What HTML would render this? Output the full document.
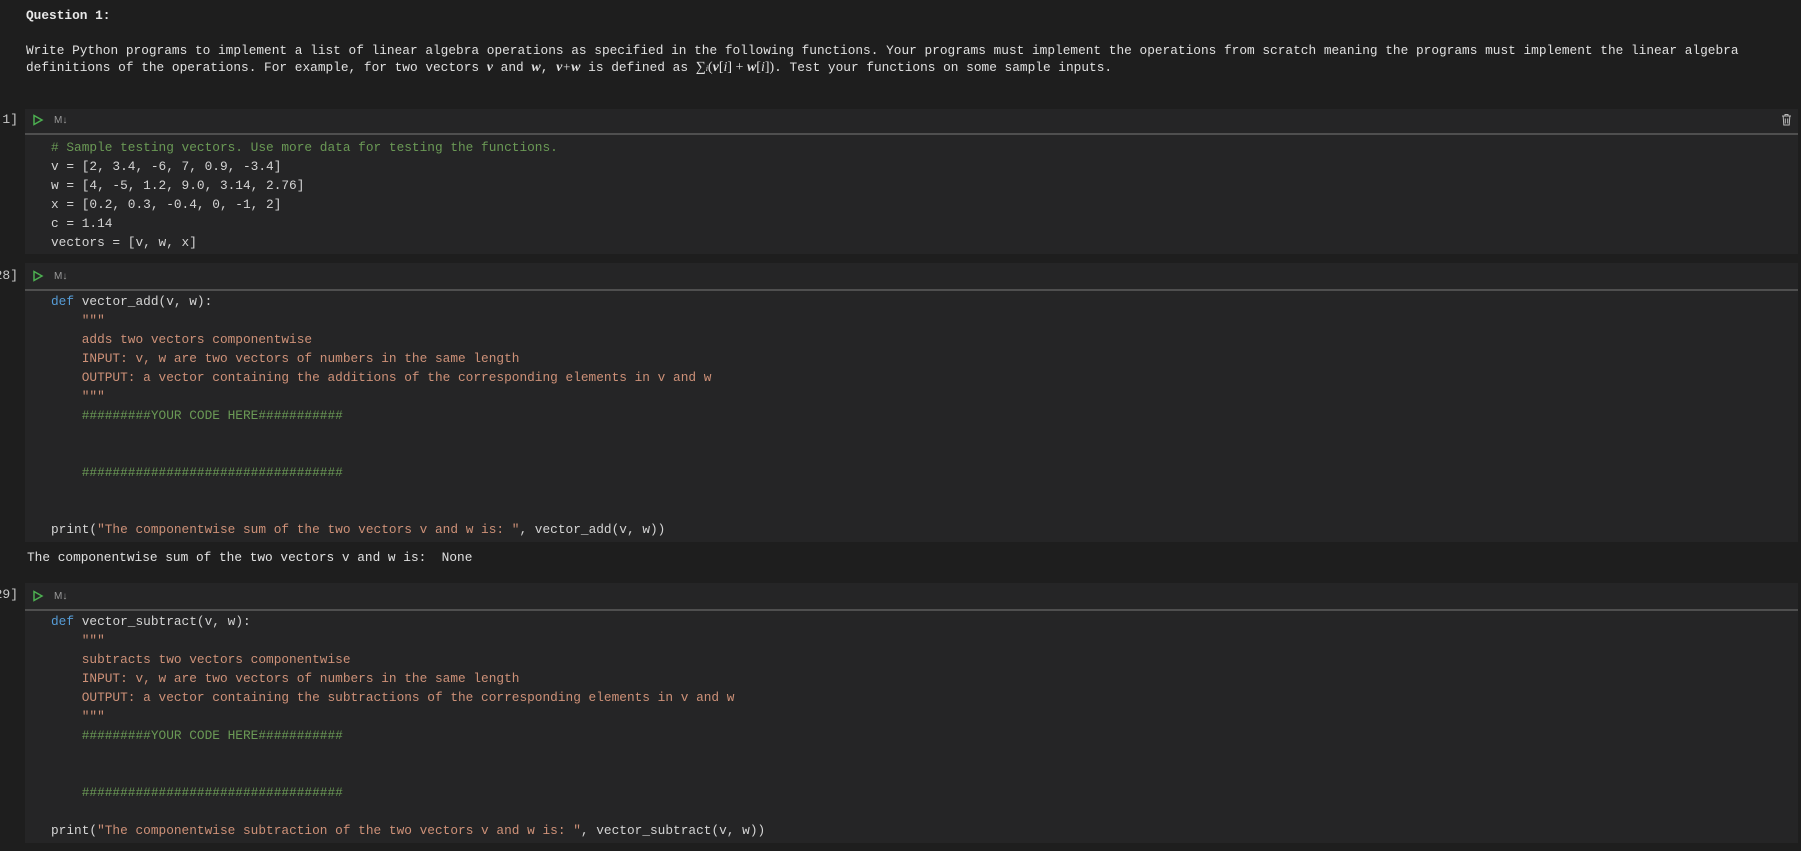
<!DOCTYPE html>
<html><head><meta charset="utf-8"><style>
body{margin:0;width:1801px;height:851px;background:#1e1e1e;overflow:hidden;position:relative;font-family:"Liberation Mono",monospace;font-size:12.8px;color:#d4d4d4}
.a{position:absolute;white-space:pre;line-height:19px}
.cell{position:absolute;left:25px;width:1773px;background:#252526}
.sep{position:absolute;left:25px;width:1773px;height:2px;background:#4f4f4f}
.cnt{position:absolute;right:1783px;color:#c8c8c8;font-size:13px;line-height:19px;white-space:pre}
.md{position:absolute;font-family:"Liberation Sans",sans-serif;font-size:10px;color:#9a9a9a;left:54px}
.k{color:#569cd6}.s{color:#ce9178}.c{color:#6a9955}.n{color:#d4d4d4}
.p span{line-height:0}
.m{font-family:"Liberation Serif",serif;font-style:italic;font-weight:bold;font-size:14px}
</style></head><body>
<div class="a" style="left:26px;top:6px;font-weight:bold;color:#e8e8e8">Question 1:</div>
<div class="a p" style="left:26px;top:42px;line-height:17px;color:#e0e0e0">Write Python programs to implement a list of linear algebra operations as specified in the following functions. Your programs must implement the operations from scratch meaning the programs must implement the linear algebra
definitions of the operations. For example, for two vectors <span class="m">v</span> and <span class="m">w</span>, <span class="m">v</span>&#8202;<span style="font-family:'Liberation Serif',serif">+</span>&#8202;<span class="m">w</span> is defined as <span style="font-family:'Liberation Serif',serif;font-size:14px">&sum;<i style="font-size:8px">i</i>(<span class="m">v</span>[<i>i</i>] + <span class="m">w</span>[<i>i</i>])</span>. Test your functions on some sample inputs.</div>

<!-- cell 1 -->
<div class="cell" style="top:109px;height:145px"></div>
<div class="sep" style="top:133px"></div>
<div class="cnt" style="top:110px">1]</div>
<svg style="position:absolute;left:32px;top:114px" width="12" height="12"><path d="M2 1.5 L10 6 L2 10.5 Z" fill="none" stroke="#4caf50" stroke-width="1.5"/></svg>
<div class="md" style="top:115px">M&#8595;</div>
<svg style="position:absolute;left:1781px;top:113px" width="11" height="13"><path d="M1 3h9M4 3V1.5h3V3M2.2 3.5l.6 8.5h5.4l.6-8.5M4.3 5.5v5M6.7 5.5v5" fill="none" stroke="#bbb" stroke-width="1"/></svg>
<div class="a" style="left:51px;top:138px"><span class="c"># Sample testing vectors. Use more data for testing the functions.</span>
v = [2, 3.4, -6, 7, 0.9, -3.4]
w = [4, -5, 1.2, 9.0, 3.14, 2.76]
x = [0.2, 0.3, -0.4, 0, -1, 2]
c = 1.14
vectors = [v, w, x]</div>

<!-- cell 2 -->
<div class="cell" style="top:263px;height:279px"></div>
<div class="sep" style="top:289px"></div>
<div class="cnt" style="top:266px">28]</div>
<svg style="position:absolute;left:32px;top:270px" width="12" height="12"><path d="M2 1.5 L10 6 L2 10.5 Z" fill="none" stroke="#4caf50" stroke-width="1.5"/></svg>
<div class="md" style="top:271px">M&#8595;</div>
<div class="a" style="left:51px;top:292px"><span class="k">def</span> vector_add(v, w):
    <span class="s">"""</span>
<span class="s">    adds two vectors componentwise</span>
<span class="s">    INPUT: v, w are two vectors of numbers in the same length</span>
<span class="s">    OUTPUT: a vector containing the additions of the corresponding elements in v and w</span>
<span class="s">    """</span>
    <span class="c">#########YOUR CODE HERE###########</span>


    <span class="c">##################################</span>


print(<span class="s">"The componentwise sum of the two vectors v and w is: "</span>, vector_add(v, w))</div>
<div class="a" style="left:27px;top:548px;color:#e0e0e0">The componentwise sum of the two vectors v and w is:  None</div>

<!-- cell 3 -->
<div class="cell" style="top:583px;height:260px"></div>
<div class="sep" style="top:609px"></div>
<div class="cnt" style="top:585px">29]</div>
<svg style="position:absolute;left:32px;top:590px" width="12" height="12"><path d="M2 1.5 L10 6 L2 10.5 Z" fill="none" stroke="#4caf50" stroke-width="1.5"/></svg>
<div class="md" style="top:591px">M&#8595;</div>
<div class="a" style="left:51px;top:612px"><span class="k">def</span> vector_subtract(v, w):
    <span class="s">"""</span>
<span class="s">    subtracts two vectors componentwise</span>
<span class="s">    INPUT: v, w are two vectors of numbers in the same length</span>
<span class="s">    OUTPUT: a vector containing the subtractions of the corresponding elements in v and w</span>
<span class="s">    """</span>
    <span class="c">#########YOUR CODE HERE###########</span>


    <span class="c">##################################</span>

print(<span class="s">"The componentwise subtraction of the two vectors v and w is: "</span>, vector_subtract(v, w))</div>
</body></html>
